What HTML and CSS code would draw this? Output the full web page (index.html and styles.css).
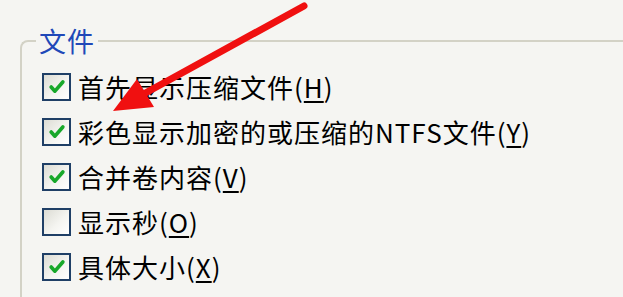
FILE: index.html
```html
<!DOCTYPE html>
<html lang="zh-CN">
<head>
    <meta charset="UTF-8">
    <meta name="viewport" content="width=device-width, initial-scale=1.0">
    <title>文件夹选项</title>
    <link rel="stylesheet" href="styles.css">
</head>
<body>
    <fieldset class="group">
        <legend class="groupTitle">文件</legend>

        <div class="option">
            <span class="box checked"><svg viewBox="0 0 24 24"><polyline points="5,12 9.5,17 19,6"/></svg></span>
            <span class="label">首先显示压缩文件(<u>H</u>)</span>
        </div>
        <div class="option">
            <span class="box checked"><svg viewBox="0 0 24 24"><polyline points="5,12 9.5,17 19,6"/></svg></span>
            <span class="label">彩色显示加密的或压缩的NTFS文件(<u>Y</u>)</span>
        </div>
        <div class="option">
            <span class="box checked"><svg viewBox="0 0 24 24"><polyline points="5,12 9.5,17 19,6"/></svg></span>
            <span class="label">合并卷内容(<u>V</u>)</span>
        </div>
        <div class="option">
            <span class="box"></span>
            <span class="label">显示秒(<u>O</u>)</span>
        </div>
        <div class="option">
            <span class="box checked"><svg viewBox="0 0 24 24"><polyline points="5,12 9.5,17 19,6"/></svg></span>
            <span class="label">具体大小(<u>X</u>)</span>
        </div>
    </fieldset>

    <!-- red annotation arrow drawn over the dialog -->
    <svg class="arrow" width="623" height="297" viewBox="0 0 623 297">
        <line x1="304" y1="6" x2="140" y2="96" />
        <polygon points="113,111 137,79 154,107" />
    </svg>
</body>
</html>
```

FILE: styles.css
```css
/* XP style dialog, zoomed in */
body {
    margin: 0;
    width: 623px;
    height: 297px;
    overflow: hidden;
    background-color: #f5f5f2; /* light dialog background */
    font-family: "Noto Sans CJK SC", "Noto Sans", sans-serif;
    position: relative;
}

/* Group box frame, runs off the right and bottom edges */
.group {
    margin: 26px 0 0 20px;
    width: 603px;
    height: 271px;
    padding: 8px 0 0 20px;
    border: 2px solid #d3d2c6;
    border-right: none;
    border-bottom: none;
    border-top-left-radius: 8px;
    box-sizing: border-box;
}

.groupTitle {
    margin-left: -6px;
    padding: 0 3px;
    font-size: 27px;
    line-height: 30px;
    letter-spacing: 1px;
    color: #2048b8; /* blue group caption */
}

/* One checkbox row */
.option {
    display: flex;
    align-items: center;
    height: 45px;
}

.box {
    width: 29px;
    height: 28px;
    box-sizing: border-box;
    border: 2px solid #1f3f66;
    background: linear-gradient(135deg, #dcdcd4 0%, #f4f4f0 55%, #ffffff 100%);
    display: flex;
    align-items: center;
    justify-content: center;
    flex-shrink: 0;
}

.box svg {
    width: 20px;
    height: 20px;
}

.box svg polyline {
    fill: none;
    stroke: #18a82a; /* green tick */
    stroke-width: 4.4;
    stroke-linecap: round;
    stroke-linejoin: round;
}

.label {
    margin-left: 7px;
    font-size: 26px;
    line-height: 30px;
    letter-spacing: 1px;
    color: #000;
    white-space: nowrap;
}

.label u {
    text-underline-offset: 3px;
}

/* Arrow overlay */
.arrow {
    position: absolute;
    left: 0;
    top: 0;
}

.arrow line {
    stroke: #f01010;
    stroke-width: 7;
    stroke-linecap: round;
}

.arrow polygon {
    fill: #f01010;
}
```
